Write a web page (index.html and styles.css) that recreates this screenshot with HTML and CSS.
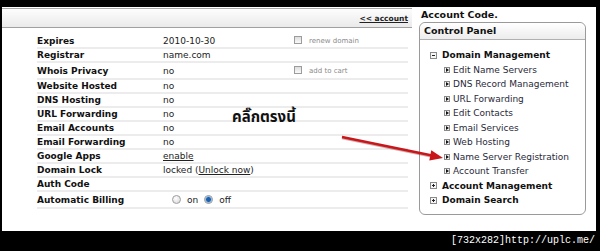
FILE: index.html
```html
<!DOCTYPE html>
<html lang="en">
<head>
    <meta charset="UTF-8">
    <title>Domain Details</title>
    <link rel="stylesheet" href="styles.css">
</head>
<body>
    <div class="frame">
        <div class="main">
            <div class="bar"><a class="back" href="#">&lt;&lt; account</a></div>
            <table class="info">
                <tr><th>Expires</th><td>2010-10-30</td><td><span class="check"></span><span class="note">renew domain</span></td></tr>
                <tr><th>Registrar</th><td>name.com</td><td></td></tr>
                <tr class="tall"><th>Whois Privacy</th><td>no</td><td><span class="check"></span><span class="note">add to cart</span></td></tr>
                <tr><th>Website Hosted</th><td>no</td><td></td></tr>
                <tr><th>DNS Hosting</th><td>no</td><td></td></tr>
                <tr><th>URL Forwarding</th><td>no</td><td></td></tr>
                <tr><th>Email Accounts</th><td>no</td><td></td></tr>
                <tr><th>Email Forwarding</th><td>no</td><td></td></tr>
                <tr><th>Google Apps</th><td><a href="#">enable</a></td><td></td></tr>
                <tr><th>Domain Lock</th><td>locked (<a href="#">Unlock now</a>)</td><td></td></tr>
                <tr><th>Auth Code</th><td></td><td></td></tr>
                <tr class="tall"><th>Automatic Billing</th><td class="radios"><span class="radio"></span>on<span class="radio on"></span>off</td><td></td></tr>
            </table>
        </div>
        <div class="side">
            <div class="code">Account Code.</div>
            <div class="panel">
                <div class="panel-head">Control Panel</div>
                <ul class="tree">
                    <li class="group"><span class="ico minus"></span>Domain Management</li>
                    <li class="leaf"><span class="ico arrow-ico"></span>Edit Name Servers</li>
                    <li class="leaf"><span class="ico arrow-ico"></span>DNS Record Management</li>
                    <li class="leaf"><span class="ico arrow-ico"></span>URL Forwarding</li>
                    <li class="leaf"><span class="ico arrow-ico"></span>Edit Contacts</li>
                    <li class="leaf"><span class="ico arrow-ico"></span>Email Services</li>
                    <li class="leaf"><span class="ico arrow-ico"></span>Web Hosting</li>
                    <li class="leaf"><span class="ico arrow-ico"></span>Name Server Registration</li>
                    <li class="leaf"><span class="ico arrow-ico"></span>Account Transfer</li>
                    <li class="group"><span class="ico plus"></span>Account Management</li>
                    <li class="group"><span class="ico plus"></span>Domain Search</li>
                </ul>
            </div>
        </div>
    </div>
    <div class="caption">[732x282]http://uplc.me/</div>

    <!-- annotation drawn over the screenshot -->
    <div class="hint">คลิ๊กตรงนี้</div>
    <svg class="pointer" width="115" height="36" viewBox="0 0 115 36">
        <line x1="7" y1="8" x2="97" y2="26.5" stroke="#7a0d0d" stroke-width="2.6" stroke-opacity="0.35"/>
        <line x1="7" y1="7" x2="97" y2="25.5" stroke="#c8161b" stroke-width="2.4"/>
        <polygon points="108,28 94.3,30.6 96.3,20.2" fill="#c8161b"/>
    </svg>
</body>
</html>
```

FILE: styles.css
```css
body {
    margin: 0;
    width: 600px;
    height: 251px;
    background: #000;
    position: relative;
    overflow: hidden;
    font-family: "DejaVu Sans", Verdana, sans-serif;
    color: #1a1a1a;
}
.frame {
    display: flex;
    margin: 7px 4px 0 2px;
    height: 224px;
    background: #fff;
}
.main {
    width: 410px;
    padding-top: 1px;
}
.bar {
    display: flex;
    justify-content: flex-end;
    align-items: center;
    height: 18px;
    padding-right: 4px;
    border-top: 1px solid #a8a8a8;
    border-bottom: 1px solid #a0a0a0;
    background: linear-gradient(#fdfdfd, #eaeaea);
}
.back {
    font-size: 7.5px;
    font-weight: bold;
    color: #222;
}
.info {
    margin: 6px 0 0 35px;
    width: 371px;
    border-collapse: collapse;
    font-size: 9px;
}
.info th,
.info td {
    height: 12px;
    padding: 0;
    line-height: 12px;
    text-align: left;
    white-space: nowrap;
    border-bottom: 2px solid #ececec;
}
.info th {
    width: 126px;
    color: #111;
}
.info td {
    width: 126px;
    color: #222;
}
.info td:last-child {
    width: auto;
}
.info tr.tall th,
.info tr.tall td {
    height: 15px;
}
.info a {
    color: #222;
}
.check {
    display: inline-block;
    width: 8px;
    height: 8px;
    box-sizing: border-box;
    border: 1px solid #9c9c9c;
    background: linear-gradient(#ddd, #fafafa);
    vertical-align: -1px;
}
.note {
    margin-left: 7px;
    font-size: 7px;
    color: #8a8a8a;
}
.radios {
    padding-left: 5px !important;
}
.radio {
    display: inline-block;
    width: 9px;
    height: 9px;
    box-sizing: border-box;
    margin: 0 6px 0 4px;
    border: 1px solid #a0a0a0;
    border-radius: 50%;
    background: radial-gradient(circle at 40% 35%, #fff, #d4d4d4);
    vertical-align: -1px;
}
.radio:first-child {
    margin-left: 4px;
}
.radio.on {
    margin-left: 6px;
    background: radial-gradient(circle, #1d5fa8 0 2px, #6aa0d8 2.5px, #eef 4px);
}
.side {
    flex: 1;
    padding-left: 7px;
}
.code {
    height: 15px;
    line-height: 15px;
    padding-left: 2px;
    font-size: 9.5px;
    font-weight: bold;
    color: #111;
}
.panel {
    width: 167px;
    height: 193px;
    box-sizing: border-box;
    border: 1px solid #9a9a9a;
    border-radius: 6px;
}
.panel-head {
    height: 16px;
    line-height: 16px;
    padding-left: 4px;
    border-bottom: 1px solid #b0b0b0;
    border-radius: 6px 6px 0 0;
    background: linear-gradient(#fff, #ececec);
    font-size: 9.5px;
    font-weight: bold;
    color: #111;
}
.tree {
    list-style: none;
    margin: 0;
    padding: 8px 0 0 10px;
    font-size: 9px;
    line-height: 14.5px;
}
.tree li {
    display: flex;
    align-items: center;
    white-space: nowrap;
}
.group {
    font-weight: bold;
    color: #111;
}
.leaf {
    padding-left: 14px;
    color: #2a2a3a;
}
.ico {
    position: relative;
    width: 7px;
    height: 7px;
    box-sizing: border-box;
    margin-right: 5px;
    border: 1px solid #8a8a8a;
    background: #f6f6f6;
}
.leaf .ico {
    width: 6px;
    height: 6px;
    margin-right: 3px;
}
.minus::after,
.plus::after {
    content: "";
    position: absolute;
    left: 1px;
    top: 2px;
    width: 3px;
    height: 1px;
    background: #222;
}
.plus::before {
    content: "";
    position: absolute;
    left: 2px;
    top: 1px;
    width: 1px;
    height: 3px;
    background: #222;
}
.arrow-ico::after {
    content: "";
    position: absolute;
    left: 1px;
    top: 0;
    border-left: 3px solid #111;
    border-top: 2px solid transparent;
    border-bottom: 2px solid transparent;
}
.caption {
    position: absolute;
    right: 5px;
    bottom: 3px;
    font-family: "Liberation Mono", monospace;
    font-size: 10px;
    line-height: 14px;
    color: #fff;
}
.hint {
    position: absolute;
    left: 232px;
    top: 108px;
    font-family: "Noto Sans Thai", Tahoma, "DejaVu Sans", sans-serif;
    font-size: 15px;
    font-weight: bold;
    line-height: 20px;
    color: #111;
}
.pointer {
    position: absolute;
    left: 335px;
    top: 130px;
}
```
